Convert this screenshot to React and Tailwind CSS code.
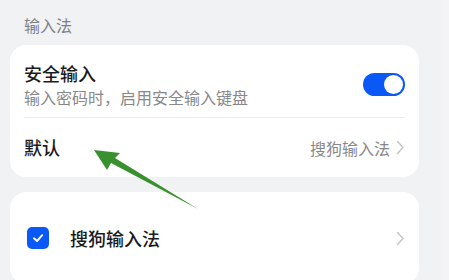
import React from 'react'

function Chevron() {
  return (
    <svg width="9" height="15" viewBox="0 0 9 15" fill="none">
      <path d="M1.5 1.5 L7 7.5 L1.5 13.5" stroke="#c4c4c6" strokeWidth="1.4" strokeLinecap="round" strokeLinejoin="round" />
    </svg>
  )
}

function Toggle() {
  return (
    <div className="flex h-[23px] w-[42px] items-center justify-end rounded-full bg-[#0a59f7] p-[2px]">
      <div className="h-[19px] w-[19px] rounded-full bg-white" />
    </div>
  )
}

function Checkbox() {
  return (
    <div className="flex h-[22px] w-[22px] items-center justify-center rounded-[5px] bg-[#0a59f7]">
      <svg width="14" height="14" viewBox="0 0 14 14" fill="none">
        <path d="M3 7.2 L6 10 L11.2 4.2" stroke="white" strokeWidth="1.9" strokeLinecap="round" strokeLinejoin="round" />
      </svg>
    </div>
  )
}

export default function App() {
  return (
    <div
      className="relative flex h-[280px] w-[449px] overflow-hidden bg-[#f1f2f4]"
      style={{ fontFamily: '"Noto Sans CJK SC", "Noto Sans", sans-serif' }}
    >
      <div className="w-[442px] pl-[10px] pr-[23px]">
        <div className="h-[45px] pl-[14px] pt-[14px] text-[16px] leading-[22px] text-[#808083]">输入法</div>

        <div className="rounded-[16px] bg-white">
          <div className="mx-[14px] flex items-center justify-between border-b border-[#ececee] pb-[9px] pt-[16px]">
            <div>
              <div className="text-[18px] font-medium leading-[24px] text-[#1b1b1d]">安全输入</div>
              <div className="mt-[1px] text-[16px] leading-[22px] text-[#88888b]">输入密码时，启用安全输入键盘</div>
            </div>
            <Toggle />
          </div>
          <div className="mx-[14px] flex h-[59px] items-center justify-between">
            <div className="text-[18px] font-medium text-[#1b1b1d]">默认</div>
            <div className="flex items-center gap-[6px]">
              <span className="text-[16px] text-[#88888b]">搜狗输入法</span>
              <Chevron />
            </div>
          </div>
        </div>

        <div className="mt-[15px] rounded-[16px] bg-white">
          <div className="mx-[14px] flex h-[92px] items-center">
            <div className="ml-[3px]">
              <Checkbox />
            </div>
            <div className="ml-[21px] flex-1 text-[18px] font-medium text-[#1b1b1d]">搜狗输入法</div>
            <Chevron />
          </div>
        </div>
      </div>
      <div className="flex-1 bg-[#f4f4f6]" />

      <svg className="absolute left-0 top-0" width="449" height="280" viewBox="0 0 449 280">
        <polygon
          points="94,150 120,153 115,158 198,209 111,163 107,170"
          fill="#39902f"
        />
      </svg>
    </div>
  )
}
